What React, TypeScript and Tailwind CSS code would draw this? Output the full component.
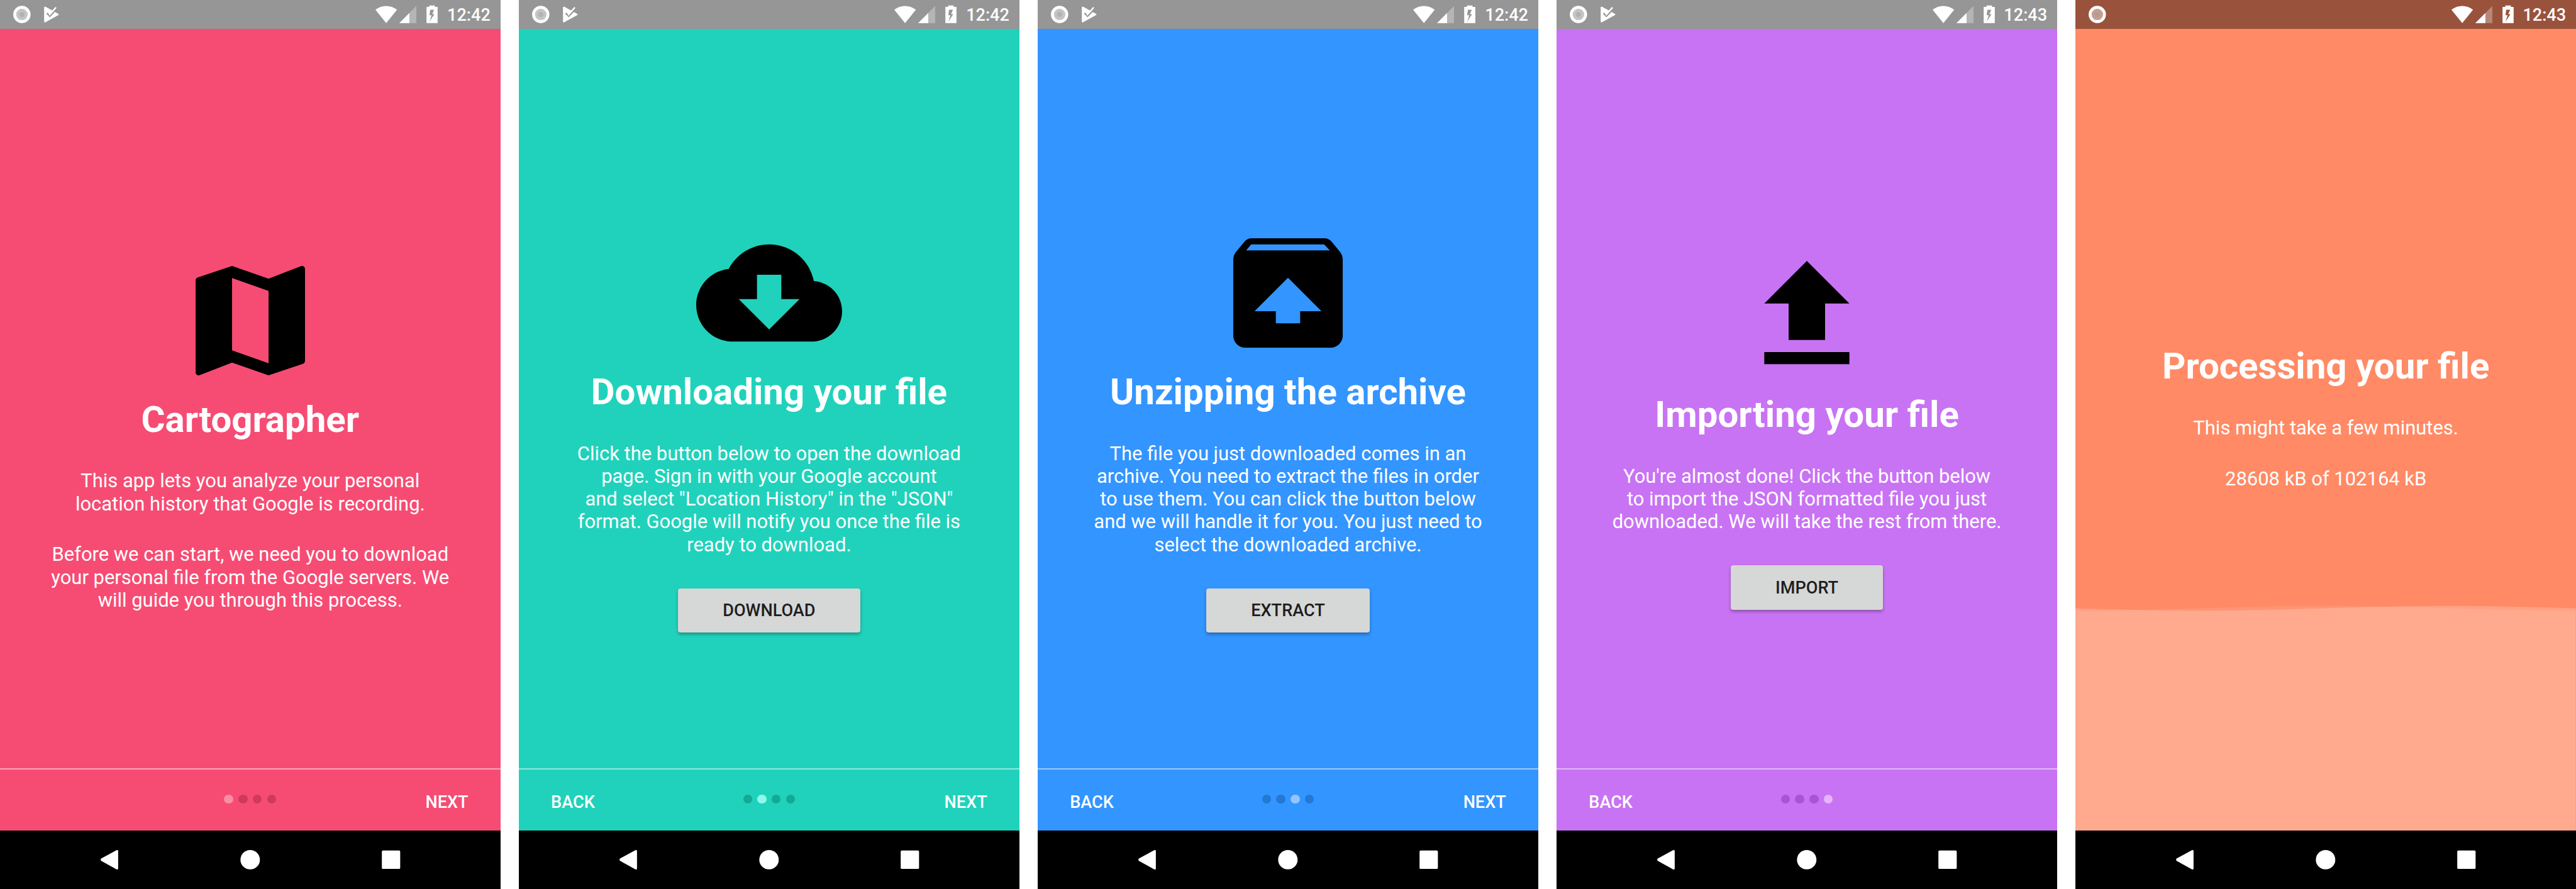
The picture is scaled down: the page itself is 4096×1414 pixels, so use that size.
import React from "react";

type Slide = {
  bg: string;
  status: string;
  top: string;
  time: string;
  icon?: React.ReactNode;
  title: string;
  paragraphs: string[][];
  action?: string;
  back?: boolean;
  next?: boolean;
  dots?: string[];
  playCheck?: boolean;
  progress?: boolean;
};

function BigIcon({ d }: { d: string }) {
  return (
    <svg viewBox="0 0 24 24" className="block size-[232px] shrink-0 fill-black">
      <path d={d} />
    </svg>
  );
}

const MAP =
  "M20.5 3l-.16.03L15 5.1 9 3 3.36 4.9c-.21.07-.36.25-.36.48V20.5c0 .28.22.5.5.5l.16-.03L9 18.9l6 2.1 5.64-1.9c.21-.07.36-.25.36-.48V3.5c0-.28-.22-.5-.5-.5zM15 19l-6-2.11V5l6 2.11V19z";
const CLOUD =
  "M19.35 10.04C18.67 6.59 15.64 4 12 4 9.11 4 6.6 5.64 5.35 8.04 2.34 8.36 0 10.91 0 14c0 3.31 2.69 6 6 6h13c2.76 0 5-2.24 5-5 0-2.64-2.05-4.78-4.65-4.96zM17 13l-5 5-5-5h3V9h4v4h3z";
const UNARCHIVE =
  "M20.55 5.22l-1.39-1.68C18.88 3.21 18.47 3 18 3H6c-.47 0-.88.21-1.15.55L3.46 5.22C3.17 5.57 3 6.01 3 6.5V19c0 1.1.89 2 2 2h14c1.1 0 2-.9 2-2V6.5c0-.49-.17-.93-.45-1.28zM12 9.5l5.5 5.5H14v2h-4v-2H6.5L12 9.5zM5.12 5l.82-1h12l.93 1H5.12z";
const UPLOAD = "M9 16h6v-6h4l-7-7-7 7h4zm-4 2h14v2H5z";

function StatusBar({ color, time, playCheck }: { color: string; time: string; playCheck?: boolean }) {
  return (
    <div className={`flex h-[46.4px] shrink-0 items-center justify-between text-white ${color}`}>
      <svg viewBox="0 0 140 63" className="block h-[46.4px] w-[103.1px]">
        <circle cx="47.3" cy="31.3" r="15.5" fill="none" stroke="#fff" strokeWidth="6.4" />
        <circle cx="47.3" cy="31.3" r="12.4" fill="#fff" fillOpacity="0.44" />
        <circle cx="47.3" cy="31.3" r="5.6" className="fill-[#969696]" fillOpacity="0.38" />
        {playCheck && (
          <g transform="scale(0.33333)">
            <path d="M286 50q0-10 9-6L378 90q7 4 0 8L297 143q-11 6-11-4z" fill="#fff" />
            <path d="M304 85L323 105L374 52" fill="none" stroke="#969696" strokeWidth="10" />
            <path d="M318 79L323 93L363 48" fill="none" stroke="#fff" strokeWidth="10" />
          </g>
        )}
      </svg>
      <div className="flex items-center pr-[15.8px]">
        <svg viewBox="805 0 150 63" className="mr-[8.3px] block h-[46.4px] w-[110.5px]" fill="#fff">
          <path d="M835 50L811.7 21.2Q822 13 835 13T858.3 21.2z" />
          <path d="M900 13V50H863.3z" fillOpacity="0.3" />
          <path d="M885 28.2V50H863.3z" />
          <path
            fillRule="evenodd"
            d="M928 12h12v3h6v35h-24V15h6zM930 21l-1.6 12h4.6l-4.6 14L939 30.500h-4.600l4-9.500z"
          />
        </svg>
        <span className="pt-[2px] text-[27.1px] leading-[32px] font-medium">{time}</span>
      </div>
    </div>
  );
}

function NavBar() {
  return (
    <div className="flex h-[92.8px] shrink-0 items-center justify-center bg-black">
      <svg viewBox="0 0 1080 126" className="block h-[92.8px] w-full" fill="#fff">
        <path d="M217.800 60.800L251.500 42.300Q255 41 255 44.500V81.500Q255 85 251.500 83.700L217.800 65.200Q216.800 63 217.800 60.800z" />
        <circle cx="540" cy="63" r="21" />
        <rect x="824.3" y="43.200" width="39.600" height="39.600" rx="2.500" />
      </svg>
    </div>
  );
}

function Footer({ back, next, dots }: { back?: boolean; next?: boolean; dots: string[] }) {
  return (
    <div className="grid h-[99.4px] shrink-0 grid-cols-[1fr_auto_1fr] items-center border-t-[2.2px] border-white/50 px-[51px] text-[27.1px] leading-[32px] font-medium text-white">
      <span className="pt-[7px]">{back ? "BACK" : ""}</span>
      <div className="flex gap-[8.4px] pb-[3px]">
        {dots.map((c, i) => (
          <span key={i} className={`size-[14.4px] rounded-full ${c}`} />
        ))}
      </div>
      <span className="pt-[7px] text-right">{next ? "NEXT" : ""}</span>
    </div>
  );
}

function wave(fn: (t: number) => number) {
  let d = "";
  for (let i = 0; i <= 60; i++) {
    const t = i / 60;
    d += `${i ? "L" : "M"}${(t * 1080).toFixed(1)} ${(6.1 + 5.1 * fn(2 * Math.PI * t)).toFixed(2)}`;
  }
  return d + "V486H0z";
}

function Waves() {
  return (
    <svg viewBox="0 0 1080 486" preserveAspectRatio="none" className="absolute inset-x-0 bottom-0 h-[358px] w-full" fill="#fff">
      <path d={wave(Math.cos)} fillOpacity="0.1" />
      <path d={wave(Math.sin)} fillOpacity="0.2" />
    </svg>
  );
}

function Phone({ s }: { s: Slide }) {
  return (
    <section className={`flex h-full w-[795.6px] shrink-0 flex-col ${s.bg}`}>
      <StatusBar color={s.status} time={s.time} playCheck={s.playCheck} />
      <main className={`relative flex min-h-0 flex-1 flex-col items-center text-center text-white ${s.top}`}>
        {s.progress && <Waves />}
        {s.icon}
        <h1 className="mt-[7.3px] text-[58.2px] leading-[68px] font-bold whitespace-nowrap">{s.title}</h1>
        <div className="mt-[46.4px] flex flex-col gap-[44.7px] text-[30.94px] leading-[36.26px] whitespace-nowrap">
          {s.paragraphs.map((lines, i) => (
            <p key={i}>
              {lines.map((line) => (
                <span key={line} className="block">
                  {line}
                </span>
              ))}
            </p>
          ))}
        </div>
        {s.action && (
          <button className="mt-[50.8px] h-[70.4px] rounded-[4px] bg-[#d6d7d7] px-[71.2px] text-[27.1px] leading-[32px] font-medium text-[#1e1e1e] shadow-[0_3px_5px_rgba(0,0,0,0.3)]">
            {s.action}
          </button>
        )}
      </main>
      {s.dots && <Footer back={s.back} next={s.next} dots={s.dots} />}
      <NavBar />
    </section>
  );
}

const slides: Slide[] = [
  {
    bg: "bg-[#f64c73]",
    status: "bg-[#969696]",
    top: "pt-[347.2px]",
    time: "12:42",
    playCheck: true,
    icon: <BigIcon d={MAP} />,
    title: "Cartographer",
    paragraphs: [
      ["This app lets you analyze your personal", "location history that Google is recording."],
      [
        "Before we can start, we need you to download",
        "your personal file from the Google servers. We",
        "will guide you through this process.",
      ],
    ],
    next: true,
    dots: ["bg-[#f98da5]", "bg-[#d1395c]", "bg-[#d1395c]", "bg-[#d1395c]"],
  },
  {
    bg: "bg-[#20d2bb]",
    status: "bg-[#969696]",
    top: "pt-[303.5px]",
    time: "12:42",
    playCheck: true,
    icon: <BigIcon d={CLOUD} />,
    title: "Downloading your file",
    paragraphs: [
      [
        "Click the button below to open the download",
        "page. Sign in with your Google account",
        'and select "Location History" in the "JSON"',
        "format. Google will notify you once the file is",
        "ready to download.",
      ],
    ],
    action: "DOWNLOAD",
    back: true,
    next: true,
    dots: ["bg-[#14a895]", "bg-[#8cf9eb]", "bg-[#14a895]", "bg-[#14a895]"],
  },
  {
    bg: "bg-[#3395ff]",
    status: "bg-[#969696]",
    top: "pt-[303.5px]",
    time: "12:42",
    playCheck: true,
    icon: <BigIcon d={UNARCHIVE} />,
    title: "Unzipping the archive",
    paragraphs: [
      [
        "The file you just downloaded comes in an",
        "archive. You need to extract the files in order",
        "to use them. You can click the button below",
        "and we will handle it for you. You just need to",
        "select the downloaded archive.",
      ],
    ],
    action: "EXTRACT",
    back: true,
    next: true,
    dots: ["bg-[#2278d4]", "bg-[#2278d4]", "bg-[#93c6fd]", "bg-[#2278d4]"],
  },
  {
    bg: "bg-[#c873f4]",
    status: "bg-[#969696]",
    top: "pt-[339.8px]",
    time: "12:43",
    playCheck: true,
    icon: <BigIcon d={UPLOAD} />,
    title: "Importing your file",
    paragraphs: [
      [
        "You're almost done! Click the button below",
        "to import the JSON formatted file you just",
        "downloaded. We will take the rest from there.",
      ],
    ],
    action: "IMPORT",
    back: true,
    dots: ["bg-[#a854d4]", "bg-[#a854d4]", "bg-[#a854d4]", "bg-[#e4b5fc]"],
  },
  {
    bg: "bg-[#ff8a65]",
    status: "bg-[#99533d]",
    top: "pt-[494.6px]",
    time: "12:43",
    title: "Processing your file",
    paragraphs: [["This might take a few minutes."], ["28608 kB of 102164 kB"]],
    progress: true,
  },
];

export default function App() {
  return (
    <div className="flex h-[1414px] w-[4096px] justify-between overflow-hidden bg-white font-['Roboto',sans-serif]">
      {slides.map((s) => (
        <Phone key={s.title} s={s} />
      ))}
    </div>
  );
}
